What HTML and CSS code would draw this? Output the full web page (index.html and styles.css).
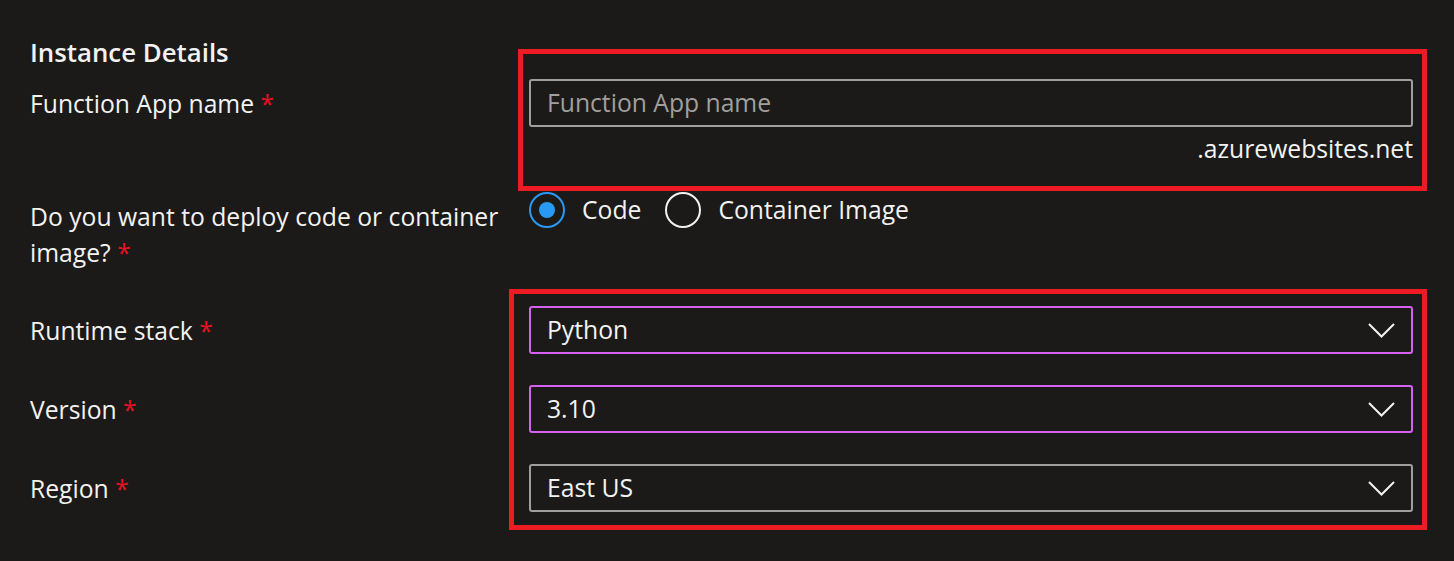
FILE: index.html
```html
<!DOCTYPE html>
<html lang="en">
<head>
<meta charset="utf-8">
<title>Instance Details</title>
<link rel="stylesheet" href="styles.css">
</head>
<body>
<main class="form">
  <h2 class="heading">Instance Details</h2>

  <div class="row row-name">
    <label class="label pad8">Function App name <span class="req">*</span></label>
    <div class="control annotated">
      <div class="input"><span class="placeholder">Function App name</span></div>
      <div class="suffix">.azurewebsites.net</div>
      <div class="mark mark-name"></div>
    </div>
  </div>

  <div class="row row-deploy">
    <div class="label pad6"><span>Do you want to deploy code or container</span><br><span>image?</span> <span class="req">*</span></div>
    <div class="control radios">
      <div class="radio-opt"><span class="radio checked"></span><span>Code</span></div>
      <div class="radio-opt"><span class="radio"></span><span>Container Image</span></div>
    </div>
  </div>

  <div class="group annotated">
    <div class="row row-select">
      <label class="label pad8">Runtime stack <span class="req">*</span></label>
      <div class="control">
        <div class="select focus"><span>Python</span>
          <svg class="chev" width="27" height="15" viewBox="0 0 27 15"><polyline points="1,1 13.5,13.5 26,1" fill="none" stroke="#f3f2f1" stroke-width="2"/></svg>
        </div>
      </div>
    </div>
    <div class="row row-select">
      <label class="label pad8">Version <span class="req">*</span></label>
      <div class="control">
        <div class="select focus"><span>3.10</span>
          <svg class="chev" width="27" height="15" viewBox="0 0 27 15"><polyline points="1,1 13.5,13.5 26,1" fill="none" stroke="#f3f2f1" stroke-width="2"/></svg>
        </div>
      </div>
    </div>
    <div class="row row-select">
      <label class="label pad8">Region <span class="req">*</span></label>
      <div class="control">
        <div class="select"><span>East US</span>
          <svg class="chev" width="27" height="15" viewBox="0 0 27 15"><polyline points="1,1 13.5,13.5 26,1" fill="none" stroke="#f3f2f1" stroke-width="2"/></svg>
        </div>
      </div>
    </div>
    <div class="mark mark-group"></div>
  </div>
</main>
</body>
</html>
```

FILE: styles.css
```css
html, body {
  margin: 0;
  padding: 0;
  background: #1b1a19;
}
body {
  width: 1454px;
  height: 561px;
  overflow: hidden;
  font-family: "Open Sans", "Noto Sans", sans-serif;
  font-size: 24.7px;
  line-height: 32px;
  color: #f3f2f1;
}
.form {
  display: flex;
  flex-direction: column;
  align-items: flex-start;
  padding-left: 30px;
}
.heading {
  margin: 36px 0 0 0;
  font-size: 25.8px;
  line-height: 32px;
  font-weight: 600;
}
.row {
  display: grid;
  grid-template-columns: 499px 884px;
  align-items: start;
}
.row-name { margin-top: 11px; }
.row-deploy { margin-top: 27px; }
.group { margin-top: 35px; display: flex; flex-direction: column; gap: 31px; }
.label { display: block; padding-right: 16px; }
.pad8 { padding-top: 9px; }
.pad6 { padding-top: 7px; line-height: 36px; }
.req { color: #e81123; }
.control { display: flex; flex-direction: column; }
.annotated { position: relative; }
.input {
  box-sizing: border-box;
  height: 48px;
  border: 2px solid #a19f9d;
  border-radius: 3px;
  padding: 0 16px;
  display: flex;
  align-items: center;
}
.placeholder { color: #a19f9d; }
.suffix { margin-top: 6px; text-align: right; }
.radios {
  flex-direction: row;
  align-items: center;
  gap: 24px;
}
.radio-opt {
  display: flex;
  align-items: center;
  gap: 17px;
}
.radio {
  box-sizing: border-box;
  width: 36px;
  height: 36px;
  border: 2px solid #f3f2f1;
  border-radius: 50%;
  display: flex;
  align-items: center;
  justify-content: center;
}
.radio.checked { border-color: #2899f5; }
.radio.checked::after {
  content: "";
  width: 16px;
  height: 16px;
  border-radius: 50%;
  background: #2899f5;
}
.select {
  box-sizing: border-box;
  height: 48px;
  border: 2px solid #a19f9d;
  border-radius: 3px;
  padding: 0 16px 0 16px;
  display: flex;
  align-items: center;
  justify-content: space-between;
}
.select.focus { border-color: #d660f0; }
.chev { display: block; }
.mark {
  position: absolute;
  border: 5px solid #ed1c24;
  pointer-events: none;
}
.mark-name { top: -30px; left: -11px; right: -14px; bottom: -26px; }
.mark-group { top: -17px; left: 479px; right: -14px; bottom: -18px; }
```
